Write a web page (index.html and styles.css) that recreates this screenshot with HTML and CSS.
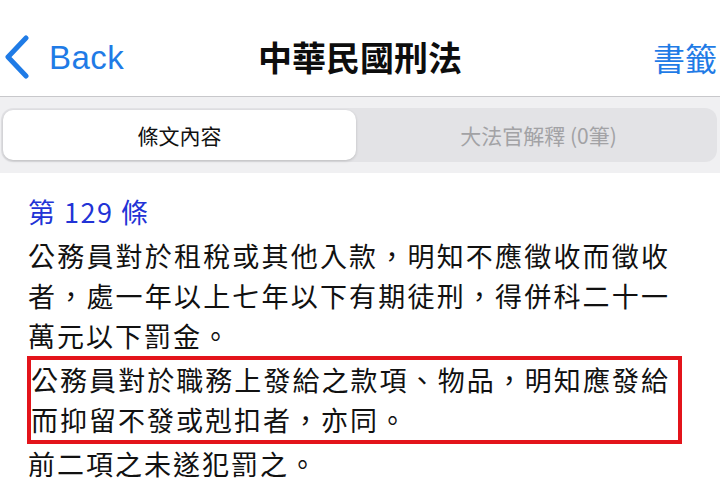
FILE: index.html
```html
<!DOCTYPE html>
<html lang="zh-Hant">
<head>
<meta charset="utf-8">
<link rel="stylesheet" href="styles.css">
</head>
<body>
<div class="nav">
  <div class="nav-left">
    <svg class="chev" width="27" height="44" viewBox="0 0 27 44"><path d="M23 3 L5 22 L23 41" fill="none" stroke="#1f7be6" stroke-width="5" stroke-linecap="round" stroke-linejoin="round"/></svg>
    <span class="back">Back</span>
  </div>
  <div class="title">中華民國刑法</div>
  <div class="nav-right">書籤</div>
</div>
<div class="seg-area">
  <div class="track">
    <div class="seg active">條文內容</div>
    <div class="seg">大法官解釋 (0筆)</div>
  </div>
</div>
<div class="content">
  <div class="heading">第 129 條</div>
  <div class="para">
    <div class="line full">公務員對於租稅或其他入款，明知不應徵收而徵收</div>
    <div class="line full">者，處一年以上七年以下有期徒刑，得併科二十一</div>
    <div class="line">萬元以下罰金。</div>
  </div>
  <div class="para boxed">
    <div class="line full">公務員對於職務上發給之款項、物品，明知應發給</div>
    <div class="line">而抑留不發或剋扣者，亦同。</div>
  </div>
  <div class="para">
    <div class="line">前二項之未遂犯罰之。</div>
  </div>
</div>
</body>
</html>
```
FILE: styles.css
```css
html, body {
  margin: 0;
  padding: 0;
  background: #ffffff;
  font-family: "Noto Sans CJK TC", "Noto Sans", sans-serif;
  color: #111111;
}
.nav {
  height: 78px;
  padding: 18px 3px 0 3px;
  display: grid;
  grid-template-columns: 1fr auto 1fr;
  align-items: center;
  border-bottom: 1px solid #c8c8cb;
}
.nav-left {
  display: flex;
  align-items: center;
  gap: 19px;
  color: #1f7be6;
}
.chev {
  display: block;
}
.back {
  font-family: "Liberation Sans", Arial, sans-serif;
  font-size: 33px;
  letter-spacing: 0.5px;
  line-height: 1;
}
.title {
  font-size: 34px;
  font-weight: 700;
  color: #0d0d0d;
  line-height: 1;
}
.nav-right {
  justify-self: end;
  font-size: 32px;
  color: #1f7be6;
  line-height: 1;
}
.seg-area {
  background: #f0f0f2;
  padding: 11px 3px 11px 1px;
}
.track {
  background: #e3e3e6;
  border-radius: 12px;
  padding: 2px;
  height: 50px;
  display: grid;
  grid-template-columns: 1fr 1fr;
  gap: 6px;
}
.seg {
  display: flex;
  align-items: center;
  justify-content: center;
  font-size: 21px;
  color: #a2a2a5;
  border-radius: 10px;
}
.seg.active {
  background: #ffffff;
  color: #111111;
  box-shadow: 0 1px 3px rgba(0, 0, 0, 0.18);
}
.content {
  padding: 19px 0 0 28px;
}
.heading {
  font-size: 27px;
  line-height: 40px;
  letter-spacing: 1.5px;
  color: #2233d6;
  margin-bottom: 4px;
}
.para {
  font-size: 27px;
  line-height: 40px;
}
.line {
  white-space: nowrap;
  letter-spacing: 2px;
}
.line.full {
  width: 640px;
  letter-spacing: 0;
  text-align: justify;
  text-align-last: justify;
}
.boxed {
  border: 4px solid #e3141b;
  width: 647px;
  margin-left: -1px;
}
.boxed .line.full {
  width: 637px;
}
```
